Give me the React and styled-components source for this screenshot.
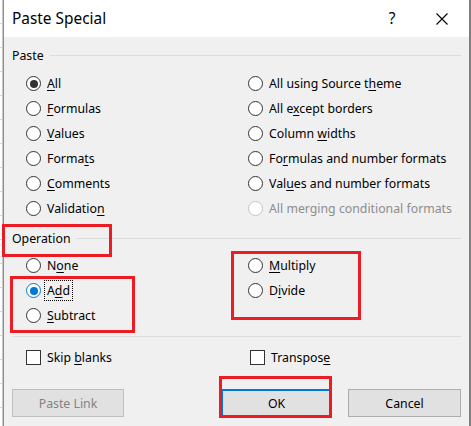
import styled, { createGlobalStyle, css } from "styled-components"

const GlobalStyle = createGlobalStyle`
html, body {
  margin: 0;
  padding: 0;
  background: #ffffff;
}
body {
  font-family: "Noto Sans", "Open Sans", sans-serif;
  color: #000;
}
u {
  text-underline-offset: 2px;
  text-decoration-thickness: 1px;
}
`

const Screen = styled.div`
position: relative;
width: 471px;
height: 426px;
display: flex;
overflow: hidden;
`
const SheetEdge = styled.div`
width: 3px;
background: repeating-linear-gradient(to bottom, #ffffff 0, #ffffff 23px, #d4d4d4 23px, #d4d4d4 24px);
border-right: 1px solid #c8c8c8;
box-sizing: border-box;
`
const Dialog = styled.div`
width: 468px;
display: flex;
flex-direction: column;
background: #f0f0f0;
border-left: 1px solid #8e8e8e;
border-right: 2px solid #7f7f7f;
box-sizing: border-box;
`
const TitleBar = styled.div`
height: 37px;
background: #ffffff;
display: flex;
align-items: center;
padding-left: 8px;
`
const Title = styled.div`
flex: 1;
font-size: 15.4px;
`
const Help = styled.div`
width: 20px;
margin-right: 34px;
font-size: 15.4px;
text-align: center;
`
const Close = styled.div`
width: 12px;
height: 12px;
margin-right: 21px;
display: flex;
`
const Body = styled.div`
flex: 1;
padding: 0 8px;
display: flex;
flex-direction: column;
`
const GroupHeader = styled.div`
height: 20px;
display: flex;
align-items: center;
gap: 6px;
font-size: 12.3px;
margin-top: ${p => p.$top}px;
`
const Rule = styled.div`
flex: 1;
height: 1px;
background: #dcdcdc;
`
const Options = styled.div`
display: grid;
grid-template-columns: 222px 1fr;
grid-auto-rows: 25px;
padding-left: 14px;
margin-top: ${p => p.$top}px;
`
const Option = styled.div`
display: flex;
align-items: center;
gap: 6px;
font-size: 12.3px;
white-space: nowrap;
color: ${p => (p.$disabled ? "#8d8d8d" : "#000")};
grid-column: ${p => p.$col || "auto"};
grid-row: ${p => p.$row || "auto"};
`
const Radio = styled.span`
position: relative;
width: 15px;
height: 15px;
border-radius: 50%;
box-sizing: border-box;
background: #fff;
border: 1px solid ${p => (p.$disabled ? "#c4c4c4" : p.$accent ? "#0078d7" : "#333")};
flex-shrink: 0;
${p => p.$checked && css`
  &::after {
    content: "";
    position: absolute;
    left: 2.5px;
    top: 2.5px;
    width: 8px;
    height: 8px;
    border-radius: 50%;
    background: ${p.$accent ? "#0078d7" : "#333"};
  }
`}
`
const Box = styled.span`
width: 15px;
height: 15px;
box-sizing: border-box;
border: 1px solid #333;
background: #fff;
flex-shrink: 0;
`
const Focus = styled.span`
outline: 1px dotted #000;
outline-offset: 1px;
padding: 0 1px;
margin-left: -1px;
`
const Separator = styled.div`
height: 1px;
background: #dcdcdc;
margin-top: 8px;
`
const Checks = styled.div`
display: grid;
grid-template-columns: 224px 1fr;
height: 25px;
padding-left: 14px;
margin-top: 8px;
`
const Buttons = styled.div`
display: flex;
align-items: center;
margin-top: 19px;
`
const Button = styled.div`
height: 28px;
width: ${p => p.$w}px;
box-sizing: border-box;
display: flex;
align-items: center;
justify-content: center;
font-size: 12.3px;
background: #e1e1e1;
border: 1px solid #adadad;
${p => p.$disabled && css`
  border-color: #bfbfbf;
  color: #838383;
`}
${p => p.$default && css`
  border: 2px solid #0078d7;
  margin-left: auto;
  margin-right: 16px;
`}
`
const Mark = styled.div`
position: absolute;
box-sizing: border-box;
border: 3px solid #ec1c24;
`

const pasteOptions = [
  [<><u>A</u>ll</>, true],
  [<><u>F</u>ormulas</>],
  [<><u>V</u>alues</>],
  [<>Forma<u>t</u>s</>],
  [<><u>C</u>omments</>],
  [<>Validatio<u>n</u></>],
  [<>All using Source t<u>h</u>eme</>],
  [<>All e<u>x</u>cept borders</>],
  [<>Column <u>w</u>idths</>],
  [<>Fo<u>r</u>mulas and number formats</>],
  [<>Val<u>u</u>es and number formats</>],
  [<>All merging conditional formats</>, false, true],
]

export default function App() {
  return (
    <Screen>
      <GlobalStyle />
      <SheetEdge />
      <Dialog>
        <TitleBar>
          <Title>Paste Special</Title>
          <Help>?</Help>
          <Close>
            <svg width="12" height="12" viewBox="0 0 12 12">
              <path d="M0.5 0.5 L11.5 11.5 M11.5 0.5 L0.5 11.5" stroke="#000" strokeWidth="1.1" fill="none" />
            </svg>
          </Close>
        </TitleBar>
        <Body>
          <GroupHeader $top={8}>
            <span>Paste</span>
            <Rule />
          </GroupHeader>
          <Options $top={6}>
            {pasteOptions.map(([label, checked, disabled], i) => (
              <Option
                key={i}
                $disabled={disabled}
                $col={i < 6 ? 1 : 2}
                $row={(i % 6) + 1}
              >
                <Radio $checked={checked} $disabled={disabled} />
                <span>{label}</span>
              </Option>
            ))}
          </Options>
          <GroupHeader $top={7}>
            <span>Operation</span>
            <Rule />
          </GroupHeader>
          <Options $top={5}>
            <Option $col={1} $row={1}>
              <Radio />
              <span>N<u>o</u>ne</span>
            </Option>
            <Option $col={1} $row={2}>
              <Radio $checked $accent />
              <Focus>A<u>d</u>d</Focus>
            </Option>
            <Option $col={1} $row={3}>
              <Radio />
              <span><u>S</u>ubtract</span>
            </Option>
            <Option $col={2} $row={1}>
              <Radio />
              <span><u>M</u>ultiply</span>
            </Option>
            <Option $col={2} $row={2}>
              <Radio />
              <span>D<u>i</u>vide</span>
            </Option>
          </Options>
          <Separator />
          <Checks>
            <Option>
              <Box />
              <span>Skip <u>b</u>lanks</span>
            </Option>
            <Option>
              <Box />
              <span>Transpos<u>e</u></span>
            </Option>
          </Checks>
          <Buttons>
            <Button $w={112} $disabled>Paste Link</Button>
            <Button $w={111} $default>OK</Button>
            <Button $w={113}>Cancel</Button>
          </Buttons>
        </Body>
      </Dialog>
      <Mark style={{ left: 2, top: 224, width: 110, height: 33 }} />
      <Mark style={{ left: 10, top: 276, width: 125, height: 57 }} />
      <Mark style={{ left: 231, top: 251, width: 130, height: 69 }} />
      <Mark style={{ left: 219, top: 376, width: 113, height: 42 }} />
    </Screen>
  )
}
